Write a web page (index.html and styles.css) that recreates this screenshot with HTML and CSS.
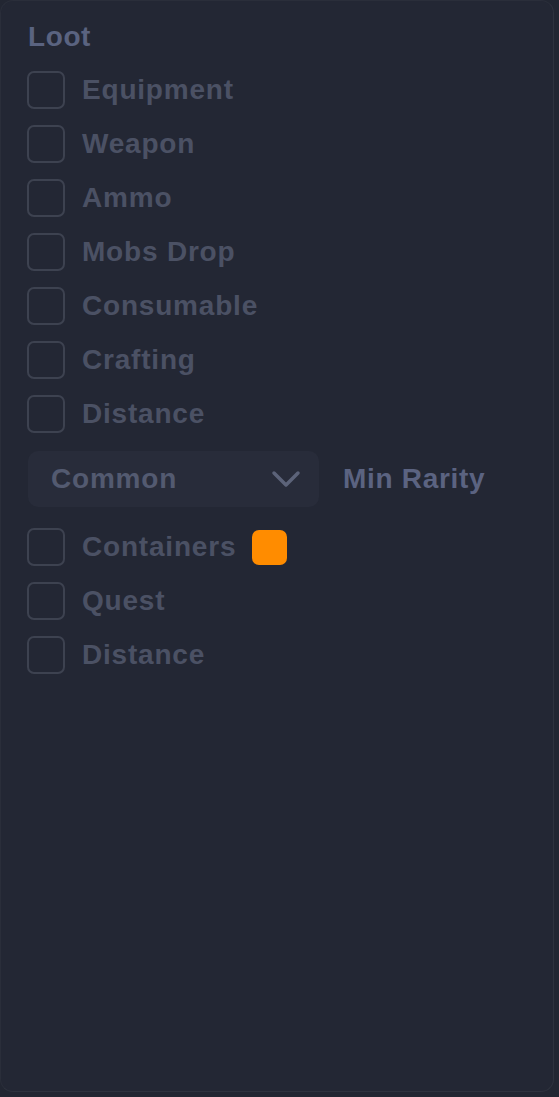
FILE: index.html
```html
<!DOCTYPE html>
<html>
<head>
<meta charset="utf-8">
<link rel="stylesheet" href="styles.css">
</head>
<body>
<div class="panel">
  <div class="heading">Loot</div>
  <div class="list">
    <label class="row"><span class="box"></span><span class="label">Equipment</span></label>
    <label class="row"><span class="box"></span><span class="label">Weapon</span></label>
    <label class="row"><span class="box"></span><span class="label">Ammo</span></label>
    <label class="row"><span class="box"></span><span class="label">Mobs Drop</span></label>
    <label class="row"><span class="box"></span><span class="label">Consumable</span></label>
    <label class="row"><span class="box"></span><span class="label">Crafting</span></label>
    <label class="row"><span class="box"></span><span class="label">Distance</span></label>
    <div class="select-row">
      <div class="select">
        <span class="select-text">Common</span>
        <svg class="chevron" width="30" height="20" viewBox="0 0 30 20"><path d="M3 4 L15 16 L27 4" fill="none" stroke="#5c6379" stroke-width="3.5" stroke-linecap="round" stroke-linejoin="round"/></svg>
      </div>
      <span class="select-label">Min Rarity</span>
    </div>
    <label class="row"><span class="box"></span><span class="label">Containers</span><span class="swatch"></span></label>
    <label class="row"><span class="box"></span><span class="label">Quest</span></label>
    <label class="row"><span class="box"></span><span class="label">Distance</span></label>
  </div>
</div>
</body>
</html>
```
FILE: styles.css
```css
html, body {
  margin: 0;
  padding: 0;
  background: #222632;
}
body {
  font-family: "Liberation Sans", Arial, sans-serif;
  font-weight: bold;
}
.panel {
  box-sizing: border-box;
  width: 554px;
  height: 1092px;
  background: #232734;
  border: 1px solid #2a2e3a;
  border-right-color: #2e323e;
  border-bottom-color: #2e323e;
  border-radius: 13px;
  padding: 18px 0 0 26px;
}
.heading {
  font-size: 28px;
  line-height: 36px;
  color: #5a6380;
  letter-spacing: 0.6px;
  padding-left: 1px;
}
.list {
  margin-top: 16px;
  display: flex;
  flex-direction: column;
  gap: 16px;
}
.row {
  display: flex;
  align-items: center;
  height: 38px;
}
.box {
  box-sizing: border-box;
  width: 38px;
  height: 38px;
  border: 2px solid #3d4250;
  border-radius: 7px;
  flex: none;
}
.label {
  margin-left: 17px;
  font-size: 28px;
  color: #4b5164;
  letter-spacing: 0.8px;
}
.swatch {
  width: 35px;
  height: 35px;
  margin-left: 16px;
  border-radius: 7px;
  background: #ff8c00;
}
.select-row {
  display: flex;
  align-items: center;
  margin: 2px 0 5px 1px;
}
.select {
  box-sizing: border-box;
  width: 291px;
  height: 56px;
  border-radius: 10px;
  background: #282c3a;
  display: flex;
  align-items: center;
  justify-content: space-between;
  padding: 0 18px 0 23px;
}
.select-text {
  font-size: 28px;
  color: #535a70;
  letter-spacing: 0.8px;
}
.select-label {
  margin-left: 24px;
  font-size: 28px;
  color: #5b6381;
  letter-spacing: 0.7px;
}
```
